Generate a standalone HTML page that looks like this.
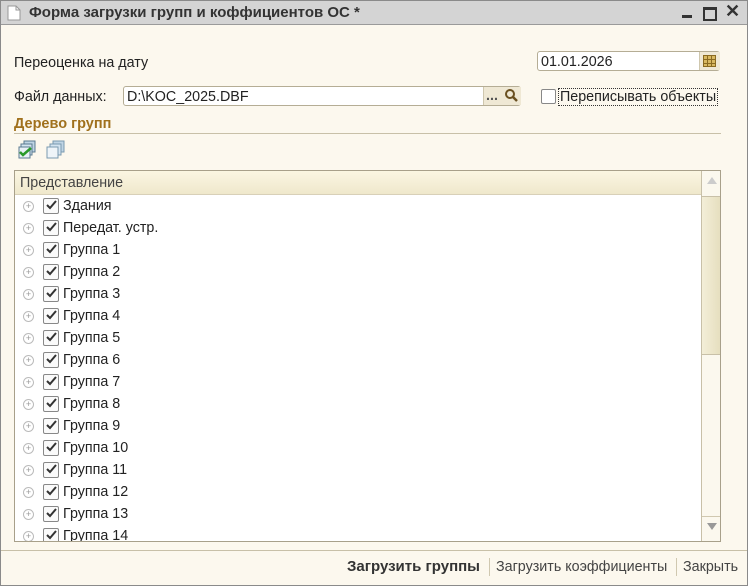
<!DOCTYPE html><html><head><style>
body{margin:0;width:748px;height:586px;overflow:hidden;font-family:"Liberation Sans",sans-serif;font-size:14.3px;color:#222;position:relative;background:#fcf8ee}
.a{position:absolute}
.win{left:0;top:0;width:746px;height:584px;border:1px solid #8a8a8a;background:#fcf8ee}
.title{left:1px;top:1px;width:746px;height:23px;background:#d4d4d4;border-bottom:1px solid #9a9a9a}
.inp{background:#fff;border:1px solid #b5ad95;border-radius:3px;height:20px;box-sizing:border-box;line-height:16px}
.row{position:absolute;left:0;height:22px;line-height:23px;width:680px}
.cb{position:absolute;left:28px;top:3px;width:14px;height:14px;border:1px solid #888;border-radius:2px;background:#fafafa}
.pl{position:absolute;left:8px;top:6px;width:9px;height:9px;border:1px solid #bbb;border-radius:50%;font-size:9px;line-height:8px;text-align:center;color:#999}
</style></head><body>
<div class="a win"></div>
<div class="a title"></div>
<svg class="a" style="left:7px;top:5px" width="14" height="16"><path d="M1 1h8l4 4v10H1z" fill="#fff" stroke="#999"/><path d="M9 1v4h4" fill="none" stroke="#999"/></svg>
<div class="a" style="left:29px;top:4px;font-weight:bold;font-size:15px;color:#333">Форма загрузки групп и коффициентов ОС *</div>
<div class="a" style="left:682px;top:15px;width:10px;height:3px;background:#333"></div>
<div class="a" style="left:703px;top:7px;width:10px;height:9px;border:2px solid #333;border-top-width:3px"></div>
<div class="a" style="left:725px;top:1px;font-size:18px;font-weight:bold;color:#333">✕</div>
<div class="a" style="left:14px;top:55px">Переоценка на дату</div>
<div class="a inp" style="left:537px;top:51px;width:183px;padding:2px 3px">01.01.2026</div>
<div class="a" style="left:699px;top:52px;width:20px;height:18px;background:#efe8d4;border-left:1px solid #cfc7ae"></div>
<svg class="a" style="left:703px;top:55px" width="13" height="12"><rect x="0.5" y="0.5" width="12" height="11" fill="#d8b860" stroke="#8a6a20"/><path d="M4.5 0v12M8.5 0v12M0 4.5h13M0 8.5h13" stroke="#8a6a20"/></svg>
<div class="a" style="left:14px;top:89px">Файл данных:</div>
<div class="a inp" style="left:123px;top:86px;width:398px;padding:2px 3px">D:\KOC_2025.DBF</div>
<div class="a" style="left:483px;top:87px;width:37px;height:18px;background:#efe8d4;border-left:1px solid #cfc7ae"></div>
<div class="a" style="left:486px;top:88px;font-weight:bold;color:#555">...</div>
<svg class="a" style="left:504px;top:88px" width="14" height="14"><circle cx="6" cy="6" r="4" fill="none" stroke="#6a5020" stroke-width="2"/><path d="M9 9l4 4" stroke="#6a5020" stroke-width="2.5"/></svg>
<div class="a" style="left:541px;top:89px;width:13px;height:13px;border:1px solid #888;border-radius:2px;background:#fff"></div>
<div class="a" style="left:558px;top:88px;border:1px dotted #333;padding:0 1px;line-height:16px;font-size:14.3px">Переписывать объекты</div>
<div class="a" style="left:14px;top:116px;font-weight:bold;color:#a0701c;font-size:14.5px">Дерево групп</div>
<div class="a" style="left:14px;top:133px;width:707px;height:1px;background:#c8c0a8"></div>
<svg class="a" style="left:18px;top:140px" width="50" height="20"><rect x="6" y="1" width="11" height="11" fill="#bfd4e4" stroke="#5a7a90"/><rect x="3" y="4" width="11" height="11" fill="#d4e4f0" stroke="#5a7a90"/><rect x="1" y="7" width="11" height="11" fill="#e8f0f6" stroke="#5a7a90"/><path d="M2 12l3 3 8-7" fill="none" stroke="#2a9a2a" stroke-width="2.5"/><rect x="35" y="1" width="11" height="11" fill="#bfd4e4" stroke="#7a9ab0"/><rect x="32" y="4" width="11" height="11" fill="#d4e4f0" stroke="#7a9ab0"/><rect x="29" y="7" width="11" height="11" fill="#eef4f8" stroke="#7a9ab0"/></svg>
<div class="a" style="left:14px;top:170px;width:705px;height:370px;border:1px solid #a8a08a;background:#fff;overflow:hidden">
<div class="a" style="left:0;top:0;width:686px;height:23px;background:linear-gradient(#fbf6e2,#efe8cc);border-bottom:1px solid #d8d0b8;line-height:24px;padding-left:5px;color:#444">Представление</div>
<div class="a" style="left:686px;top:0;width:19px;height:370px;background:#fbf8ee;border-left:1px solid #c8c0a8"></div>
<div class="a" style="left:692px;top:6px;width:0;height:0;border:5px solid transparent;border-bottom:7px solid #ccc;border-top:0"></div>
<div class="a" style="left:687px;top:25px;width:18px;height:157px;background:linear-gradient(90deg,#f3eed8,#e6dfbf);border-top:1px solid #c8c0a8;border-bottom:1px solid #c8c0a8"></div>
<div class="a" style="left:692px;top:352px;width:0;height:0;border:5px solid transparent;border-top:7px solid #999;border-bottom:0"></div>
<div class="a" style="left:687px;top:345px;width:18px;height:1px;background:#d0c8b0"></div>
<div class="a" style="left:0;top:24px;width:686px">
<div class="row" style="top:0"><span class="pl">+</span><span class="cb"></span><span style="position:absolute;left:48px">Здания</span></div>
<div class="row" style="top:22px"><span class="pl">+</span><span class="cb"></span><span style="position:absolute;left:48px">Передат. устр.</span></div>
<div class="row" style="top:44px"><span class="pl">+</span><span class="cb"></span><span style="position:absolute;left:48px">Группа 1</span></div>
<div class="row" style="top:66px"><span class="pl">+</span><span class="cb"></span><span style="position:absolute;left:48px">Группа 2</span></div>
<div class="row" style="top:88px"><span class="pl">+</span><span class="cb"></span><span style="position:absolute;left:48px">Группа 3</span></div>
<div class="row" style="top:110px"><span class="pl">+</span><span class="cb"></span><span style="position:absolute;left:48px">Группа 4</span></div>
<div class="row" style="top:132px"><span class="pl">+</span><span class="cb"></span><span style="position:absolute;left:48px">Группа 5</span></div>
<div class="row" style="top:154px"><span class="pl">+</span><span class="cb"></span><span style="position:absolute;left:48px">Группа 6</span></div>
<div class="row" style="top:176px"><span class="pl">+</span><span class="cb"></span><span style="position:absolute;left:48px">Группа 7</span></div>
<div class="row" style="top:198px"><span class="pl">+</span><span class="cb"></span><span style="position:absolute;left:48px">Группа 8</span></div>
<div class="row" style="top:220px"><span class="pl">+</span><span class="cb"></span><span style="position:absolute;left:48px">Группа 9</span></div>
<div class="row" style="top:242px"><span class="pl">+</span><span class="cb"></span><span style="position:absolute;left:48px">Группа 10</span></div>
<div class="row" style="top:264px"><span class="pl">+</span><span class="cb"></span><span style="position:absolute;left:48px">Группа 11</span></div>
<div class="row" style="top:286px"><span class="pl">+</span><span class="cb"></span><span style="position:absolute;left:48px">Группа 12</span></div>
<div class="row" style="top:308px"><span class="pl">+</span><span class="cb"></span><span style="position:absolute;left:48px">Группа 13</span></div>
<div class="row" style="top:330px"><span class="pl">+</span><span class="cb"></span><span style="position:absolute;left:48px">Группа 14</span></div>
</div></div>
<svg class="a" style="left:43px;top:197px" width="16" height="345"><g fill="none" stroke="#333" stroke-width="2">
<path d="M4 8l3 3 6-7"/><path d="M4 30l3 3 6-7"/><path d="M4 52l3 3 6-7"/><path d="M4 74l3 3 6-7"/><path d="M4 96l3 3 6-7"/><path d="M4 118l3 3 6-7"/><path d="M4 140l3 3 6-7"/><path d="M4 162l3 3 6-7"/><path d="M4 184l3 3 6-7"/><path d="M4 206l3 3 6-7"/><path d="M4 228l3 3 6-7"/><path d="M4 250l3 3 6-7"/><path d="M4 272l3 3 6-7"/><path d="M4 294l3 3 6-7"/><path d="M4 316l3 3 6-7"/><path d="M4 338l3 3 6-7"/></g></svg>
<div class="a" style="left:1px;top:550px;width:746px;height:1px;background:#c8c0a8"></div>
<div class="a" style="left:347px;top:558px;font-weight:bold;color:#333;font-size:15px">Загрузить группы</div>
<div class="a" style="left:489px;top:558px;width:1px;height:18px;background:#d0c8b0"></div>
<div class="a" style="left:496px;top:559px;color:#444;font-size:14.3px">Загрузить коэффициенты</div>
<div class="a" style="left:676px;top:558px;width:1px;height:18px;background:#d0c8b0"></div>
<div class="a" style="left:683px;top:559px;color:#444;font-size:14.3px">Закрыть</div>
</body></html>
